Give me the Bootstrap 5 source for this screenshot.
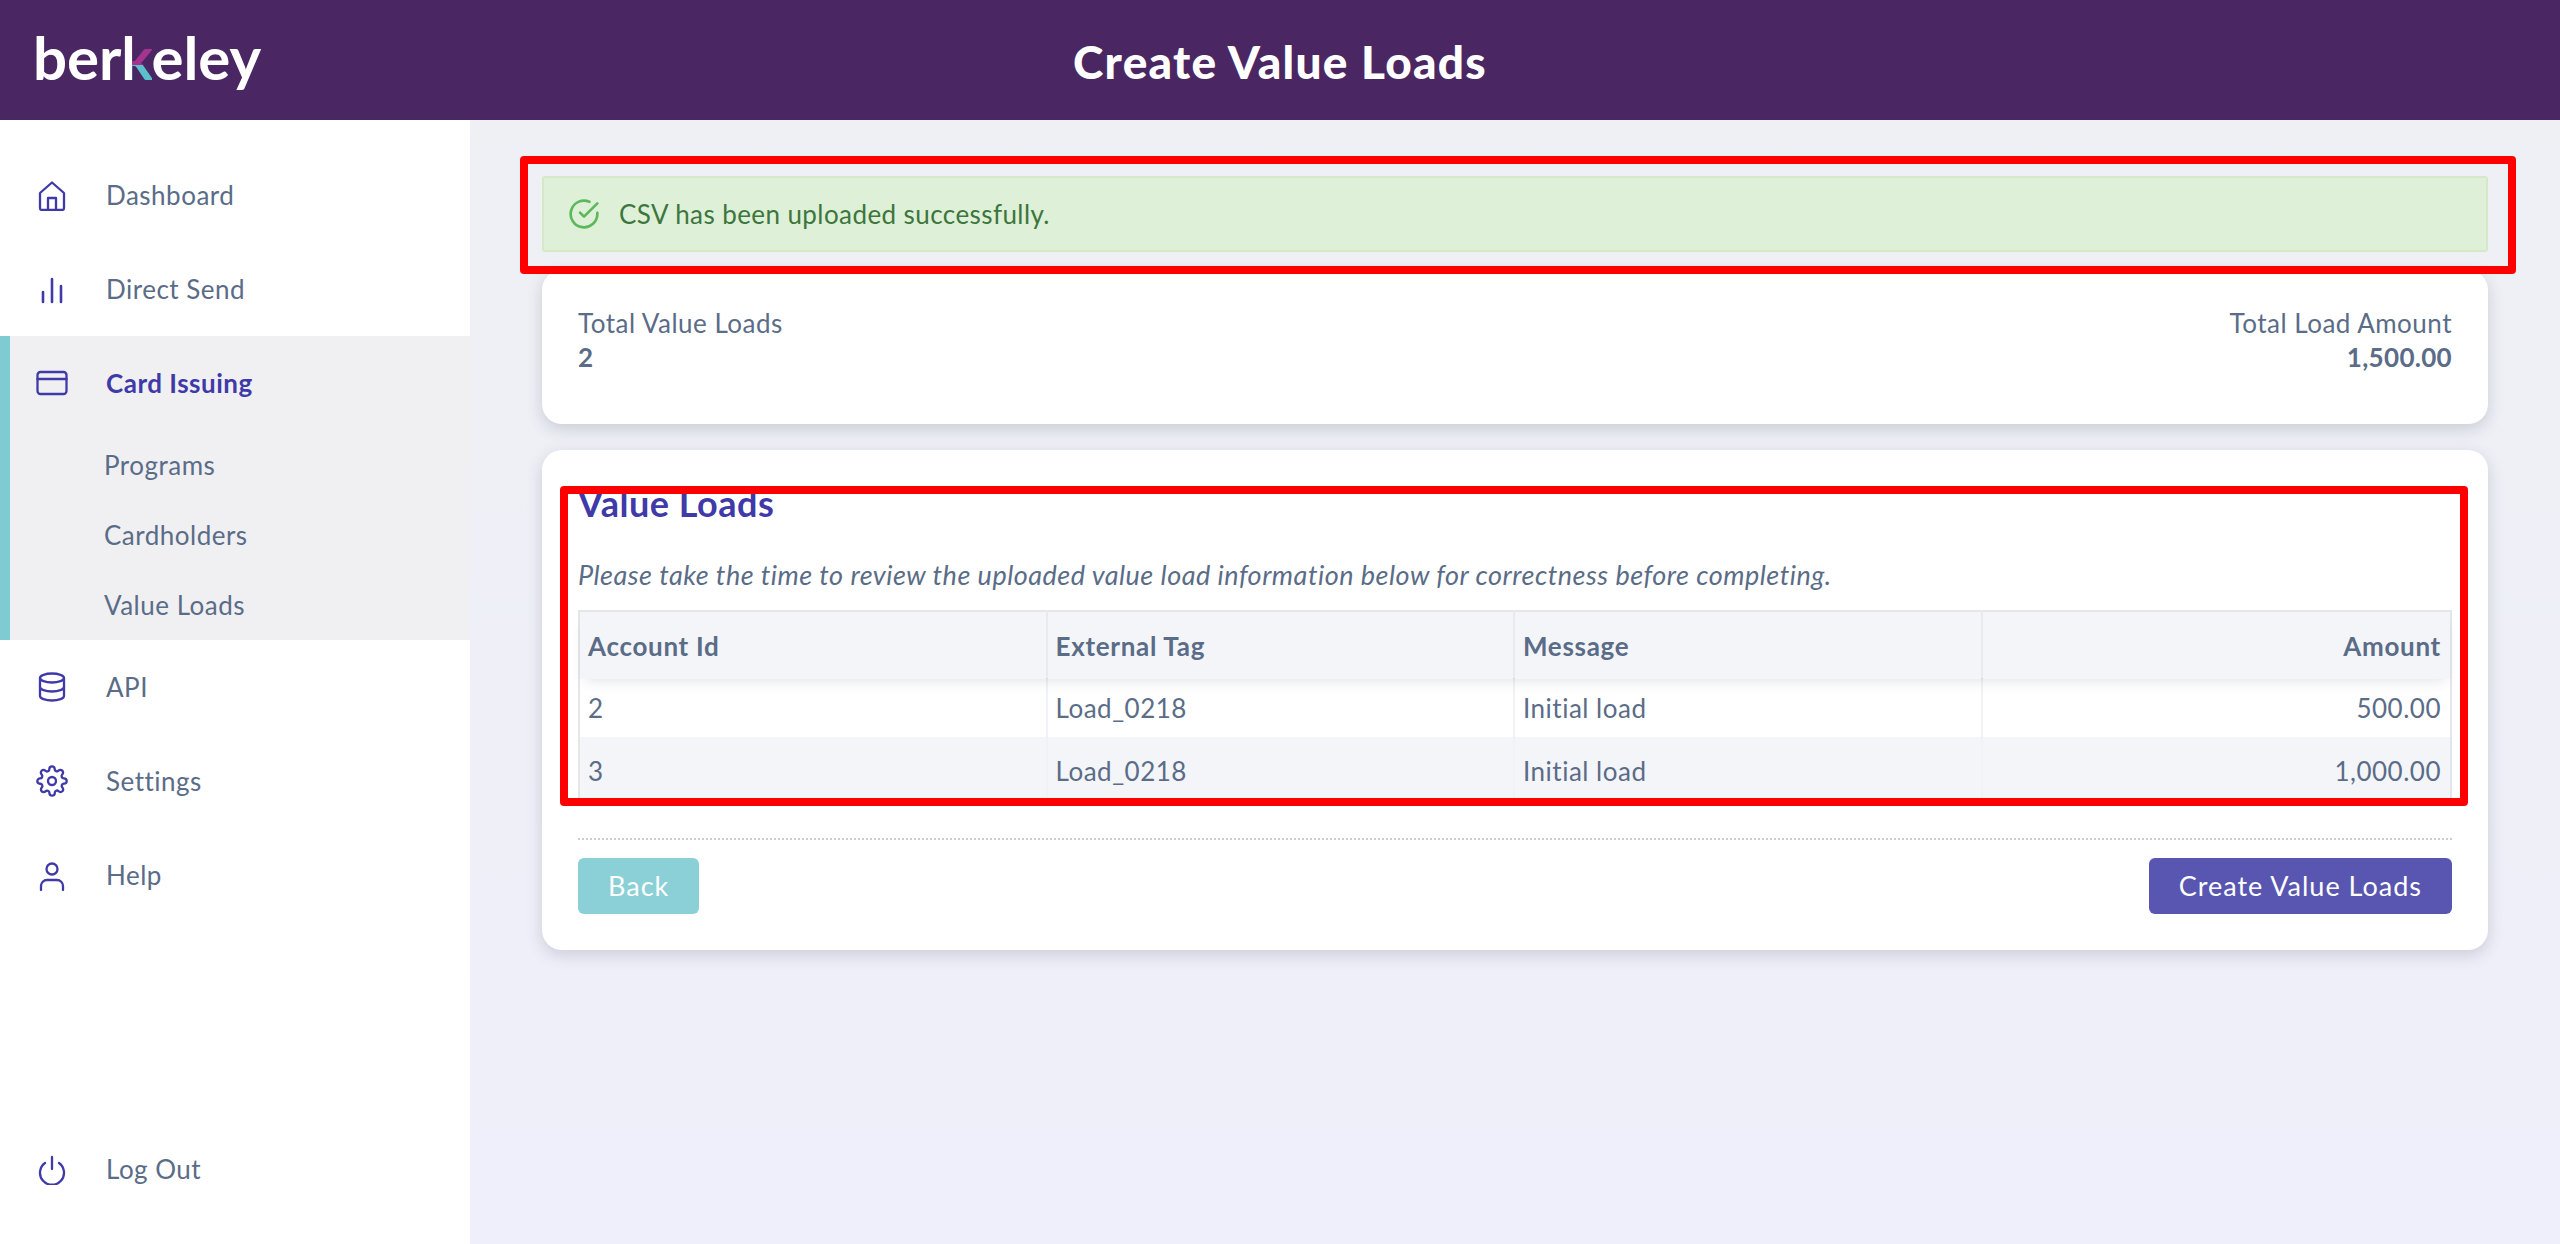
<!DOCTYPE html>
<html lang="en">
<head>
    <meta charset="UTF-8">
    <meta name="viewport" content="width=device-width, initial-scale=1.0">
    <title>Create Value Loads</title>
    <link href="https://cdn.jsdelivr.net/npm/bootstrap@5.3.0/dist/css/bootstrap.min.css" rel="stylesheet">
    <style>
        html, body { height: 100%; }
        body {
            position: relative;
            font-family: Lato, "Liberation Sans", sans-serif;
            font-size: 26px;
            line-height: 34px;
            letter-spacing: .5px;
            color: #5a6c87;
            background: #fff;
            overflow: hidden;
        }
        .top-bar { height: 120px; padding: 0 33px; background: #4a2763; color: #fff; grid-template-columns: 1fr auto 1fr; }
        .brand-word { justify-self: start; margin-bottom: 6px; font-size: 60px; line-height: 70px; font-weight: 700; letter-spacing: -.1px; }
        .brand-k {
            background: linear-gradient(90deg, #fff 0 36%, transparent 36%), linear-gradient(180deg, #a4348f 0 61%, #5bc0cc 61%);
            -webkit-background-clip: text;
            background-clip: text;
            color: transparent;
        }
        .page-title { margin: 4px 0 0; font-size: 46px; line-height: 50px; font-weight: 900; letter-spacing: 1.25px; }
        .page-body { height: 1124px; }
        .side-nav { width: 470px; padding: 28px 0; }
        .side-item { height: 94px; padding-left: 36px; gap: 38px; color: #5a6c87; text-decoration: none; }
        .side-item svg { width: 32px; height: 32px; fill: none; stroke: #3f3aa8; stroke-width: 2.3; stroke-linecap: round; stroke-linejoin: round; flex: none; }
        .side-item svg.gear-ico { stroke-width: 1.75; }
        .side-group { background: #f0f0f3; border-left: 10px solid #7ecbd1; }
        .side-group .side-item { padding-left: 26px; }
        .side-active { color: #3f3aa8; font-weight: 700; }
        .side-sub { height: 70px; padding-left: 94px; color: #5a6c87; text-decoration: none; }
        .main-pane { padding: 56px 72px 0; background: linear-gradient(180deg, #eef0f4, #eeeffa); }
        .upload-note {
            height: 76px; margin-bottom: 18px; padding: 0 24px; gap: 19px;
            background: #dff0d8; border: 2px solid #d6e9c6; border-radius: 3px; color: #3c763d; letter-spacing: .42px;
        }
        .upload-note svg { width: 32px; height: 32px; fill: none; stroke: #5cb85c; stroke-width: 2; stroke-linecap: round; stroke-linejoin: round; }
        .info-card { border: 0; border-radius: 20px; padding: 36px; box-shadow: 0 5px 16px rgba(60, 64, 90, .2); color: #5a6c87; }
        .totals-card { height: 154px; margin-bottom: 26px; }
        .totals-card strong { letter-spacing: .3px; }
        .loads-card { height: 500px; }
        .loads-title { font-size: 36px; line-height: 38px; font-weight: 700; color: #3f3aa8; margin: -2px 0 36px; }
        .loads-note { margin: 0 0 18px; font-size: 27px; font-style: italic; }
        .loads-table { table-layout: fixed; margin: 0; border: 2px solid #e5e6e9; height: 196px; --bs-table-color: #5a6c87; --bs-table-bg: transparent; }
        .loads-table th, .loads-table td { padding: 0 9px 0 8px; vertical-align: middle; border-bottom: 0; border-right: 2px solid #f1f2f5; color: #5a6c87; }
        .loads-table th { width: 467.5px; border-right-color: #e9eaee; font-weight: 700; letter-spacing: .7px; }
        .loads-table th:last-child { width: auto; }
        .loads-table th:last-child, .loads-table td:last-child { border-right: 0; }
        .loads-table thead tr { background: #f4f5f9; height: 68px; box-shadow: 0 8px 12px -6px rgba(60, 64, 90, .14); position: relative; }
        .loads-table tbody tr { height: 58px; }
        .loads-table tbody tr:nth-child(2) { background: #f4f5f9; height: 68px; }
        .dot-rule { border-top: 2px dotted #cccccc; margin: 32px 0 18px; }
        .act-btn { height: 56px; padding: 0 30px; border: 0; border-radius: 6px; color: #fff; font-size: 27px; line-height: 56px; letter-spacing: 1px; }
        .act-btn:hover { color: #fff; }
        .act-back { background: #8bd0d6; }
        .act-back:hover { background: #8bd0d6; }
        .act-create { background: #5856b0; }
        .act-create:hover { background: #5856b0; }
        .note-frame { border: 8px solid #ff0000; border-radius: 4px; pointer-events: none; }
        .frame-one { left: 520px; top: 156px; width: 1996px; height: 118px; }
        .frame-two { left: 560px; top: 486px; width: 1908px; height: 320px; }
    </style>
</head>
<body>

    <header class="top-bar d-grid align-items-center">
        <a class="brand-word text-white text-decoration-none" href="#">ber<span class="brand-k">k</span>eley</a>
        <h1 class="page-title">Create Value Loads</h1>
    </header>

    <div class="page-body d-flex">
        <nav class="side-nav d-flex flex-column flex-shrink-0">
            <a class="side-item d-flex align-items-center" href="#">
                <svg viewBox="0 0 32 32"><path d="M4 14 16 3.500 28 14v15a2 2 0 0 1-2 2H6a2 2 0 0 1-2-2z"/><path d="M12 31V19h8v12"/></svg>
                Dashboard
            </a>
            <a class="side-item d-flex align-items-center" href="#">
                <svg viewBox="0 0 32 32"><path d="M7 19v10M16 6v23M25 13v16" stroke-width="2.6"/></svg>
                Direct Send
            </a>
            <div class="side-group">
                <a class="side-item side-active d-flex align-items-center" href="#">
                    <svg viewBox="0 0 32 32"><rect x="1.5" y="5" width="29" height="22" rx="3"/><path d="M1.500 12h29"/></svg>
                    Card Issuing
                </a>
                <a class="side-sub d-flex align-items-center" href="#">Programs</a>
                <a class="side-sub d-flex align-items-center" href="#">Cardholders</a>
                <a class="side-sub d-flex align-items-center" href="#">Value Loads</a>
            </div>
            <a class="side-item d-flex align-items-center" href="#">
                <svg viewBox="0 0 32 32"><ellipse cx="16" cy="7" rx="12" ry="4.5"/><path d="M4 7v18c0 2.500 5.400 4.500 12 4.500s12-2 12-4.500V7"/><path d="M4 16c0 2.500 5.400 4.500 12 4.500S28 18.500 28 16"/></svg>
                API
            </a>
            <a class="side-item d-flex align-items-center" href="#">
                <svg class="gear-ico" viewBox="0 0 24 24"><circle cx="12" cy="12" r="3"/><path d="M19.400 15a1.650 1.650 0 0 0 .33 1.820l.06.06a2 2 0 0 1 0 2.830 2 2 0 0 1-2.830 0l-.06-.06a1.650 1.650 0 0 0-1.820-.33 1.650 1.650 0 0 0-1 1.510V21a2 2 0 0 1-2 2 2 2 0 0 1-2-2v-.09A1.650 1.650 0 0 0 9 19.400a1.650 1.650 0 0 0-1.820.33l-.06.06a2 2 0 0 1-2.830 0 2 2 0 0 1 0-2.830l.06-.06a1.650 1.650 0 0 0 .33-1.820 1.650 1.650 0 0 0-1.510-1H3a2 2 0 0 1-2-2 2 2 0 0 1 2-2h.09A1.650 1.650 0 0 0 4.600 9a1.650 1.650 0 0 0-.33-1.820l-.06-.06a2 2 0 0 1 0-2.830 2 2 0 0 1 2.830 0l.06.06a1.650 1.650 0 0 0 1.820.33H9a1.650 1.650 0 0 0 1-1.510V3a2 2 0 0 1 2-2 2 2 0 0 1 2 2v.09a1.650 1.650 0 0 0 1 1.510 1.650 1.650 0 0 0 1.820-.33l.06-.06a2 2 0 0 1 2.830 0 2 2 0 0 1 0 2.830l-.06.06a1.650 1.650 0 0 0-.33 1.820V9a1.650 1.650 0 0 0 1.510 1H21a2 2 0 0 1 2 2 2 2 0 0 1-2 2h-.09a1.650 1.650 0 0 0-1.510 1z"/></svg>
                Settings
            </a>
            <a class="side-item d-flex align-items-center" href="#">
                <svg viewBox="0 0 32 32"><circle cx="16" cy="10" r="5.500"/><path d="M5 31v-4a6 6 0 0 1 6-6h10a6 6 0 0 1 6 6v4"/></svg>
                Help
            </a>
            <a class="side-item d-flex align-items-center mt-auto" href="#">
                <svg viewBox="0 0 32 32"><path d="M16 4v12M9 10a12 12 0 1 0 14 0"/></svg>
                Log Out
            </a>
        </nav>

        <main class="main-pane flex-grow-1">
            <div class="upload-note d-flex align-items-center">
                <svg viewBox="0 0 24 24"><path d="M22 11.080V12a10 10 0 1 1-5.930-9.140"/><path d="M22 4 12 14.010l-3-3"/></svg>
                CSV has been uploaded successfully.
            </div>

            <div class="card info-card totals-card">
                <div class="d-flex justify-content-between">
                    <div>Total Value Loads<br><strong>2</strong></div>
                    <div class="text-end">Total Load Amount<br><strong>1,500.00</strong></div>
                </div>
            </div>

            <div class="card info-card loads-card">
                <h2 class="loads-title">Value Loads</h2>
                <p class="loads-note">Please take the time to review the uploaded value load information below for correctness before completing.</p>
                <table class="table loads-table">
                    <thead>
                        <tr><th>Account Id</th><th>External Tag</th><th>Message</th><th class="text-end">Amount</th></tr>
                    </thead>
                    <tbody>
                        <tr><td>2</td><td>Load_0218</td><td>Initial load</td><td class="text-end">500.00</td></tr>
                        <tr><td>3</td><td>Load_0218</td><td>Initial load</td><td class="text-end">1,000.00</td></tr>
                    </tbody>
                </table>
                <div class="dot-rule"></div>
                <div class="d-flex justify-content-between">
                    <a class="btn act-btn act-back" href="#">Back</a>
                    <a class="btn act-btn act-create" href="#">Create Value Loads</a>
                </div>
            </div>
        </main>
    </div>

    <div class="note-frame frame-one position-absolute"></div>
    <div class="note-frame frame-two position-absolute"></div>

    <script src="https://cdn.jsdelivr.net/npm/bootstrap@5.3.0/dist/js/bootstrap.bundle.min.js"></script>
</body>
</html>
